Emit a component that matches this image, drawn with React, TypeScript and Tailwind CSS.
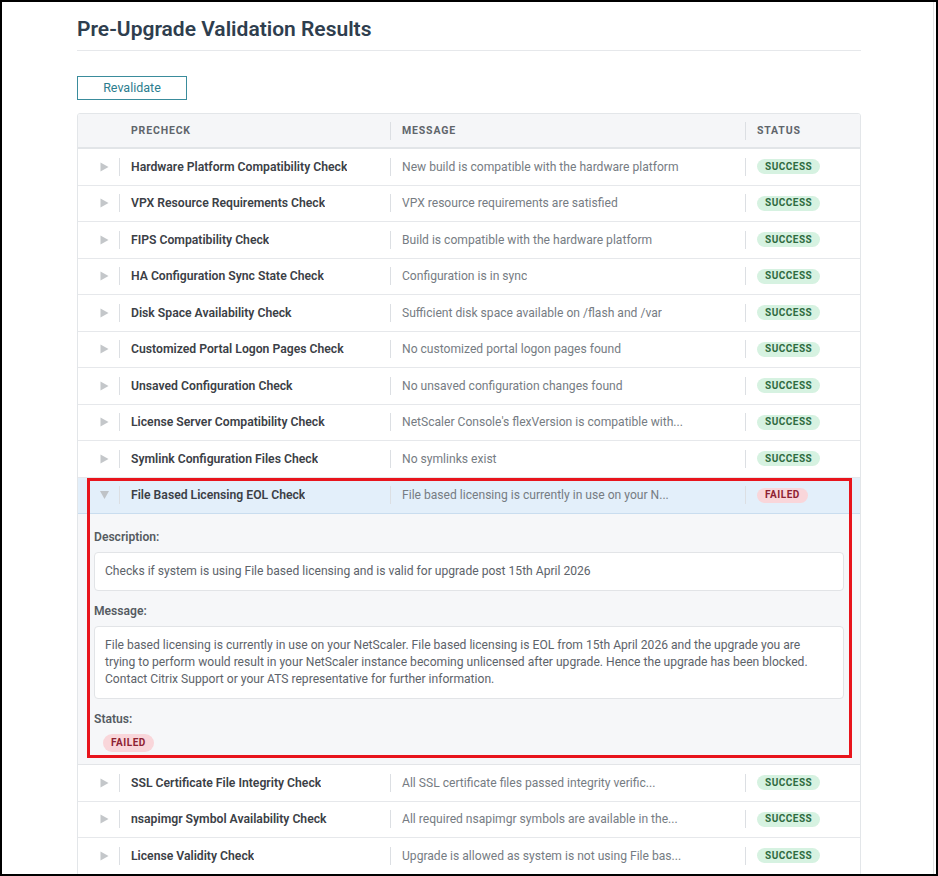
import React from "react";

type Row = { name: string; msg: string; status: "SUCCESS" | "FAILED"; expanded?: boolean };

const rows: Row[] = [
  { name: "Hardware Platform Compatibility Check", msg: "New build is compatible with the hardware platform", status: "SUCCESS" },
  { name: "VPX Resource Requirements Check", msg: "VPX resource requirements are satisfied", status: "SUCCESS" },
  { name: "FIPS Compatibility Check", msg: "Build is compatible with the hardware platform", status: "SUCCESS" },
  { name: "HA Configuration Sync State Check", msg: "Configuration is in sync", status: "SUCCESS" },
  { name: "Disk Space Availability Check", msg: "Sufficient disk space available on /flash and /var", status: "SUCCESS" },
  { name: "Customized Portal Logon Pages Check", msg: "No customized portal logon pages found", status: "SUCCESS" },
  { name: "Unsaved Configuration Check", msg: "No unsaved configuration changes found", status: "SUCCESS" },
  { name: "License Server Compatibility Check", msg: "NetScaler Console's flexVersion is compatible with...", status: "SUCCESS" },
  { name: "Symlink Configuration Files Check", msg: "No symlinks exist", status: "SUCCESS" },
  { name: "File Based Licensing EOL Check", msg: "File based licensing is currently in use on your N...", status: "FAILED", expanded: true },
  { name: "SSL Certificate File Integrity Check", msg: "All SSL certificate files passed integrity verific...", status: "SUCCESS" },
  { name: "nsapimgr Symbol Availability Check", msg: "All required nsapimgr symbols are available in the...", status: "SUCCESS" },
  { name: "License Validity Check", msg: "Upgrade is allowed as system is not using File bas...", status: "SUCCESS" },
];

function Pill({ status }: { status: "SUCCESS" | "FAILED" }) {
  if (status === "SUCCESS") {
    return (
      <span className="inline-flex h-[15px] items-center rounded-full bg-[#d6f2e1] px-[8px] text-[10px] font-bold leading-none tracking-[0.05em] text-[#2f6b40]">
        SUCCESS
      </span>
    );
  }
  return (
    <span className="inline-flex h-[15px] items-center rounded-full bg-[#f9d6da] px-[8px] text-[10px] font-bold leading-none tracking-[0.05em] text-[#8e2232]">
      FAILED
    </span>
  );
}

function Divider() {
  return <span className="h-[18px] w-px shrink-0 bg-[#dcdfe3]" />;
}

function TableRow({ r }: { r: Row }) {
  return (
    <div
      className={
        "flex h-[36.5px] items-center border-b " +
        (r.expanded ? "border-[#c9ddef] bg-[#e3effa]" : "border-[#e6e8eb] bg-white")
      }
    >
      <div className="flex w-[42px] shrink-0 items-center justify-between pl-[22px]">
        <svg width="9" height="10" viewBox="0 0 9 10" className="block">
          {r.expanded ? (
            <polygon points="0,1 9,1 4.5,9" fill="#bfc3c7" />
          ) : (
            <polygon points="0.5,0.5 8.5,5 0.5,9.5" fill="#c4c7ca" />
          )}
        </svg>
        <Divider />
      </div>
      <div className="flex w-[271px] shrink-0 items-center justify-between">
        <span className="truncate pl-[11px] text-[12.2px] font-semibold text-[#3b4046]">{r.name}</span>
        <Divider />
      </div>
      <div className="flex w-[355px] shrink-0 items-center justify-between">
        <span className="truncate pl-[11px] text-[12.1px] text-[#767c83]">{r.msg}</span>
        <Divider />
      </div>
      <div className="flex flex-1 items-center pl-[11px]">
        <Pill status={r.status} />
      </div>
    </div>
  );
}

function Details() {
  return (
    <div className="border-b border-[#e3e5e8] bg-[#f6f7f9] px-[16px] pb-[12px] pt-[15px]">
      <div className="mb-[6px] text-[12.1px] font-semibold leading-[17px] text-[#555b61]">Description:</div>
      <div className="rounded-[4px] border border-[#e2e4e7] bg-white px-[10px] py-[10px] text-[12.1px] leading-[17px] text-[#5d636a]">
        Checks if system is using File based licensing and is valid for upgrade post 15th April 2026
      </div>
      <div className="mb-[6px] mt-[12px] text-[12.1px] font-semibold leading-[17px] text-[#555b61]">Message:</div>
      <div className="rounded-[4px] border border-[#e2e4e7] bg-white px-[10px] py-[10px] text-[12.1px] leading-[17px] text-[#5d636a]">
        <div className="whitespace-nowrap">
          File based licensing is currently in use on your NetScaler. File based licensing is EOL from 15th April 2026 and the upgrade you are
        </div>
        <div className="whitespace-nowrap">
          trying to perform would result in your NetScaler instance becoming unlicensed after upgrade. Hence the upgrade has been blocked.
        </div>
        <div className="whitespace-nowrap">Contact Citrix Support or your ATS representative for further information.</div>
      </div>
      <div className="mb-[6px] mt-[12px] text-[12.1px] font-semibold leading-[17px] text-[#555b61]">Status:</div>
      <div className="flex pl-[9px]">
        <span className="inline-flex h-[18px] items-center rounded-full bg-[#f9d6da] px-[8px] text-[10px] font-bold leading-none tracking-[0.05em] text-[#8e2232]">
          FAILED
        </span>
      </div>
    </div>
  );
}

export default function App() {
  return (
    <div
      className="flex h-[876px] w-[938px] overflow-hidden border-2 border-black bg-white"
      style={{ fontFamily: "Roboto, 'Noto Sans', Arial, sans-serif" }}
    >
      <div className="min-w-0 flex-1 pl-[75px] pr-[72px]">
        <div className="mt-[13px] flex h-[36px] items-start border-b border-[#e6e8eb]">
          <h1 className="text-[21px] font-semibold leading-[28px] text-[#2f3e4e]">Pre-Upgrade Validation Results</h1>
        </div>
        <button className="mt-[25px] h-[24px] w-[110px] border border-[#3a8c9c] bg-white text-[12.5px] leading-none text-[#2b7d8e]">
          Revalidate
        </button>
        <div className="mt-[13px] overflow-hidden rounded-[3px] border border-[#e3e6e9]">
          <div className="flex h-[35px] items-center border-b-2 border-[#e2e5e8] bg-[#f5f6f8]">
            <div className="w-[42px] shrink-0" />
            <div className="flex w-[271px] shrink-0 items-center justify-between">
              <span className="pl-[11px] text-[10.5px] font-bold tracking-[0.08em] text-[#5f656b]">PRECHECK</span>
              <Divider />
            </div>
            <div className="flex w-[355px] shrink-0 items-center justify-between">
              <span className="pl-[11px] text-[10.5px] font-bold tracking-[0.08em] text-[#5f656b]">MESSAGE</span>
              <Divider />
            </div>
            <div className="flex-1 pl-[11px] text-[10.5px] font-bold tracking-[0.08em] text-[#5f656b]">STATUS</div>
          </div>
          {rows.map((r) =>
            r.expanded ? (
              <div key={r.name} className="relative">
                <TableRow r={r} />
                <Details />
                <div className="pointer-events-none absolute bottom-[7px] left-[9px] right-[8px] top-0 border-[3px] border-[#e8141c]" />
              </div>
            ) : (
              <TableRow key={r.name} r={r} />
            )
          )}
        </div>
      </div>
      <div className="w-[3px] shrink-0 border-l border-[#e3e3e3]" />
    </div>
  );
}
